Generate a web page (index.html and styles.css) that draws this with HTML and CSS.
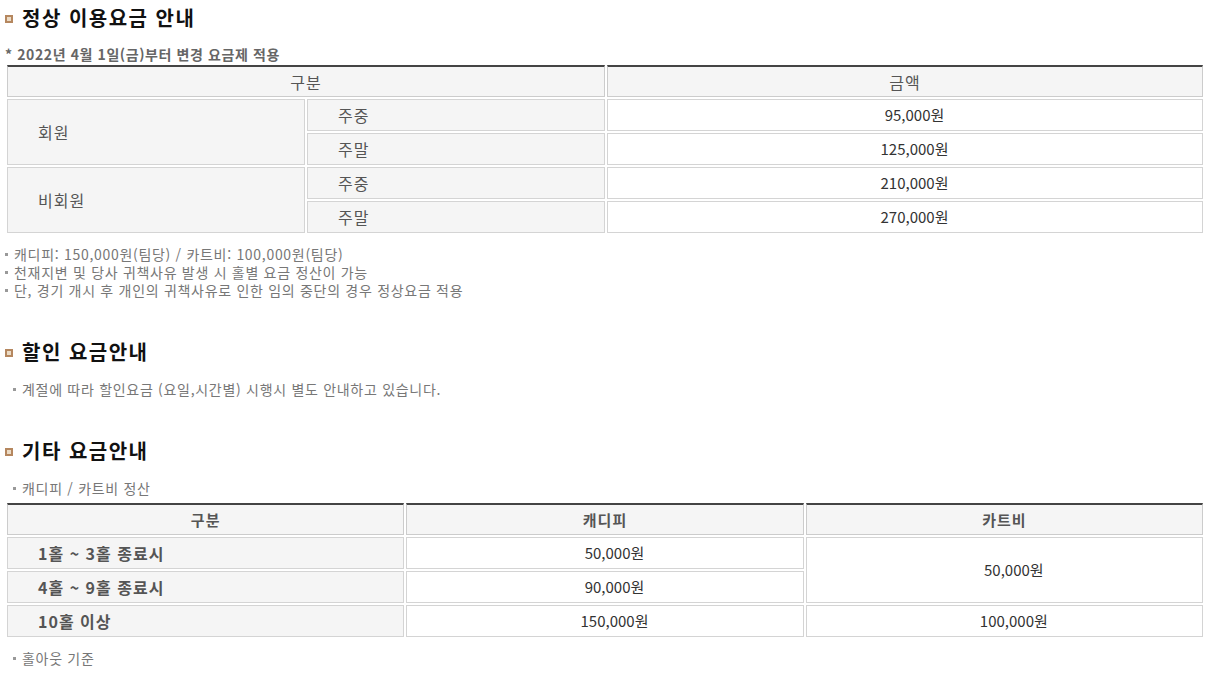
FILE: index.html
```html
<!DOCTYPE html>
<html lang="ko">
<head>
<meta charset="utf-8">
<title>요금안내</title>
<link rel="stylesheet" href="styles.css">
</head>
<body>
<section class="sec sec-first">
  <h2 class="title"><span class="ico"></span>정상 이용요금 안내</h2>
  <p class="sub">* 2022년 4월 1일(금)부터 변경 요금제 적용</p>
  <table class="tbl tbl1">
    <colgroup><col class="c25"><col class="c25"><col class="c50"></colgroup>
    <thead>
      <tr><th colspan="2">구분</th><th>금액</th></tr>
    </thead>
    <tbody>
      <tr><td rowspan="2" class="lbl">회원</td><td class="lbl">주중</td><td class="val">95,000원</td></tr>
      <tr><td class="lbl">주말</td><td class="val">125,000원</td></tr>
      <tr><td rowspan="2" class="lbl">비회원</td><td class="lbl">주중</td><td class="val">210,000원</td></tr>
      <tr><td class="lbl">주말</td><td class="val">270,000원</td></tr>
    </tbody>
  </table>
  <ul class="notes">
    <li>캐디피: 150,000원(팀당) / 카트비: 100,000원(팀당)</li>
    <li>천재지변 및 당사 귀책사유 발생 시 홀별 요금 정산이 가능</li>
    <li>단, 경기 개시 후 개인의 귀책사유로 인한 임의 중단의 경우 정상요금 적용</li>
  </ul>
</section>

<section class="sec">
  <h2 class="title"><span class="ico"></span>할인 요금안내</h2>
  <ul class="notes indent">
    <li>계절에 따라 할인요금 (요일,시간별) 시행시 별도 안내하고 있습니다.</li>
  </ul>
</section>

<section class="sec">
  <h2 class="title"><span class="ico"></span>기타 요금안내</h2>
  <ul class="notes indent">
    <li>캐디피 / 카트비 정산</li>
  </ul>
  <table class="tbl tbl2">
    <colgroup><col class="c33"><col class="c33"><col class="c33"></colgroup>
    <thead>
      <tr><th>구분</th><th>캐디피</th><th>카트비</th></tr>
    </thead>
    <tbody>
      <tr><td class="lbl bold">1홀 ~ 3홀 종료시</td><td class="val">50,000원</td><td class="val" rowspan="2">50,000원</td></tr>
      <tr><td class="lbl bold">4홀 ~ 9홀 종료시</td><td class="val">90,000원</td></tr>
      <tr><td class="lbl bold">10홀 이상</td><td class="val">150,000원</td><td class="val">100,000원</td></tr>
    </tbody>
  </table>
  <ul class="notes indent after">
    <li>홀아웃 기준</li>
  </ul>
</section>
</body>
</html>
```

FILE: styles.css
```css
html, body {
  margin: 0;
  padding: 0;
  background: #fff;
}
body {
  padding: 0 4px 0 5px;
  font-family: "Noto Sans CJK KR", "Noto Sans", sans-serif;
  color: #333;
}
.sec { margin-top: 41px; }
.sec-first { margin-top: 6px; }

.title {
  margin: 0;
  font-size: 20px;
  line-height: 24px;
  letter-spacing: 1.5px;
  font-weight: 700;
  color: #111;
  display: flex;
  align-items: center;
}
.ico {
  width: 4px;
  height: 4px;
  border: 2px solid #b5875f;
  background: #ecdcc6;
  margin: 1px 9px 0 0;
  flex: none;
}
.sub {
  margin: 15px 0 0;
  font-size: 14px;
  line-height: 18px;
  letter-spacing: 0.6px;
  font-weight: 700;
  color: #666;
}

.tbl {
  width: 1200px;
  table-layout: fixed;
  border-collapse: separate;
  border-spacing: 2px;
  font-size: 15px;
}
.tbl1 { margin-top: 0; }
.tbl2 { margin-top: 4px; }
.c25 { width: 25%; }
.c50 { width: 50%; }
.c33 { width: 33.33%; }

.tbl th {
  height: 32px;
  box-sizing: border-box;
  padding: 0;
  background: #f5f5f5;
  border: 1px solid #ccc;
  border-top: 2px solid #444;
  font-size: 16px;
  letter-spacing: 1px;
  font-weight: 400;
  color: #555;
  text-align: center;
  vertical-align: middle;
}
.tbl2 th { font-weight: 700; font-size: 15px; }
.tbl td {
  height: 32px;
  box-sizing: border-box;
  padding: 0;
  border: 1px solid #d4d4d4;
  vertical-align: middle;
}
.tbl td.lbl {
  background: #f5f5f5;
  color: #555;
  font-size: 16px;
  letter-spacing: 1px;
  padding-left: 30px;
  text-align: left;
}
.tbl td.bold { font-weight: 700; }
.tbl td.val {
  background: #fff;
  color: #333;
  text-align: center;
  padding: 0 0 2px 19px;
}

.notes {
  list-style: none;
  margin: 10px 0 0;
  padding: 0;
  font-size: 14px;
  line-height: 18px;
  letter-spacing: 0.7px;
  color: #777;
}
.notes li {
  display: flex;
  align-items: center;
}
.notes li::before {
  content: "";
  width: 3px;
  height: 3px;
  background: #999;
  margin-right: 6px;
  flex: none;
}
.notes.indent { padding-left: 8px; margin-top: 16px; }
.notes.after { margin-top: 10px; }
```
